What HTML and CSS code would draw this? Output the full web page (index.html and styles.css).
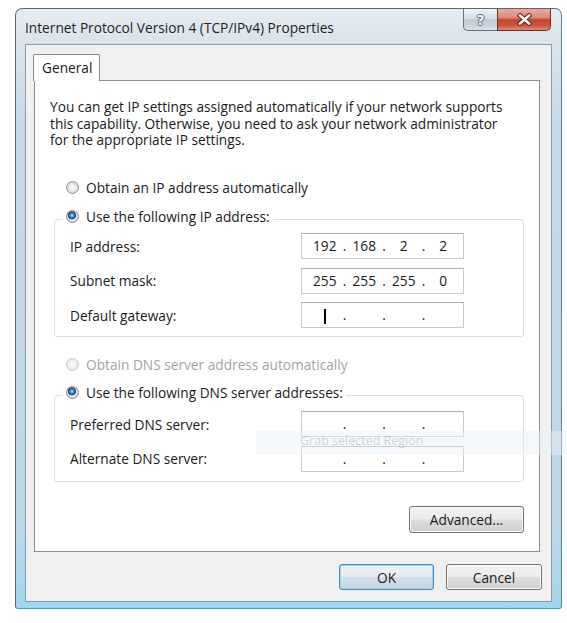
FILE: index.html
```html
<!DOCTYPE html>
<html lang="en">
<head>
<meta charset="utf-8">
<title>Internet Protocol Version 4 (TCP/IPv4) Properties</title>
<link rel="stylesheet" href="styles.css">
</head>
<body>
<div class="window">
  <div class="titlebar">
    <span class="title">Internet Protocol Version 4 (TCP/IPv4) Properties</span>
    <div class="caption">
      <div class="cap-btn help"><span class="qmark">?</span></div>
      <div class="cap-btn close">
        <svg width="17" height="13" viewBox="0 0 17 13">
          <path d="M4 2.5 L13 10.5 M13 2.5 L4 10.5" stroke="#6a2016" stroke-width="4.6" stroke-linecap="square" fill="none"/>
          <path d="M4 2.5 L13 10.5 M13 2.5 L4 10.5" stroke="#ffffff" stroke-width="2.6" stroke-linecap="square" fill="none"/>
        </svg>
      </div>
    </div>
  </div>
  <div class="client">
    <div class="tabs"><div class="tab">General</div></div>
    <div class="panel">
      <p class="desc">You can get IP settings assigned automatically if your network supports this capability. Otherwise, you need to ask your network administrator for the appropriate IP settings.</p>

      <div class="radio-row first-radio"><span class="radio"></span><span>Obtain an IP address automatically</span></div>

      <fieldset class="group group-ip">
        <legend><span class="radio checked"></span><span>Use the following IP address:</span></legend>
        <div class="field-row">
          <span class="label">IP address:</span>
          <div class="ipfield"><span class="oct">192</span><span class="dot">.</span><span class="oct">168</span><span class="dot">.</span><span class="oct">2</span><span class="dot">.</span><span class="oct">2</span></div>
        </div>
        <div class="field-row">
          <span class="label">Subnet mask:</span>
          <div class="ipfield"><span class="oct">255</span><span class="dot">.</span><span class="oct">255</span><span class="dot">.</span><span class="oct">255</span><span class="dot">.</span><span class="oct">0</span></div>
        </div>
        <div class="field-row">
          <span class="label">Default gateway:</span>
          <div class="ipfield"><span class="oct"><span class="caret"></span></span><span class="dot">.</span><span class="oct"></span><span class="dot">.</span><span class="oct"></span><span class="dot">.</span><span class="oct"></span></div>
        </div>
      </fieldset>

      <div class="radio-row disabled dns-auto"><span class="radio"></span><span>Obtain DNS server address automatically</span></div>

      <fieldset class="group group-dns">
        <legend><span class="radio checked"></span><span>Use the following DNS server addresses:</span></legend>
        <div class="field-row">
          <span class="label">Preferred DNS server:</span>
          <div class="ipfield"><span class="oct"></span><span class="dot">.</span><span class="oct"></span><span class="dot">.</span><span class="oct"></span><span class="dot">.</span><span class="oct"></span></div>
        </div>
        <div class="field-row">
          <span class="label">Alternate DNS server:</span>
          <div class="ipfield"><span class="oct"></span><span class="dot">.</span><span class="oct"></span><span class="dot">.</span><span class="oct"></span><span class="dot">.</span><span class="oct"></span></div>
        </div>
      </fieldset>

      <div class="adv-row"><div class="btn adv">Advanced...</div></div>
    </div>
    <div class="footer">
      <div class="btn ok">OK</div>
      <div class="btn cancel">Cancel</div>
    </div>
  </div>
</div>
<div class="grab">Grab selected Region</div>
</body>
</html>
```
FILE: styles.css
```css
* { box-sizing: border-box; }

body {
  margin: 0;
  background: #ffffff;
  font-family: "Open Sans", "Noto Sans", sans-serif;
  font-size: 13.7px;
  color: #1a1a1a;
}

.window {
  margin: 8px 0 0 15px;
  width: 547px;
  height: 601px;
  border: 1px solid #5d666e;
  border-bottom-color: #3f9fcf;
  border-right-color: #55809e;
  border-radius: 7px 7px 3px 3px;
  background: linear-gradient(to bottom, #e6ecf1 0px, #d9e3eb 34px, #c4daea 120px, #bcd7ea 520px, #9fd6ef 600px);
  padding: 0 9px 6px 9px;
  display: flex;
  flex-direction: column;
}

.titlebar {
  height: 35px;
  display: flex;
  justify-content: space-between;
  align-items: flex-start;
}

.title {
  padding-top: 10px;
  line-height: 17px;
  color: #1e1e1e;
}

.caption {
  display: flex;
  height: 22px;
  margin-right: 1px;
}

.cap-btn {
  height: 22px;
  display: flex;
  align-items: center;
  justify-content: center;
  border: 1px solid #6a737c;
  border-top: none;
}

.help {
  width: 34px;
  border-radius: 0 0 0 5px;
  border-right: none;
  background: linear-gradient(to bottom, #eef2f5 0%, #d6dee5 45%, #bdc9d3 52%, #d5e0e8 100%);
}

.qmark {
  font-family: "DejaVu Sans", sans-serif;
  font-weight: bold;
  font-size: 14px;
  line-height: 16px;
  color: #f4f6f8;
  text-shadow: 1px 0 #5c6670, -1px 0 #5c6670, 0 1px #5c6670, 0 -1px #5c6670;
}

.close {
  width: 54px;
  border-radius: 0 0 5px 0;
  border-color: #7a2a20;
  background: linear-gradient(to bottom, #e8ab9e 0%, #d9887a 42%, #c4432e 52%, #c95a43 80%, #dc8f73 100%);
}

.client {
  height: 558px;
  border: 1px solid #8c98a2;
  background: #f0f0f0;
  padding-top: 9px;
}

.tabs {
  display: flex;
  padding-left: 7px;
}

.tab {
  position: relative;
  z-index: 1;
  height: 27px;
  margin-bottom: -1px;
  padding: 0 7px 0 8px;
  line-height: 26px;
  background: #ffffff;
  border: 1px solid #898c95;
  border-bottom: none;
  border-radius: 2px 2px 0 0;
}

.panel {
  margin-left: 8px;
  width: 506px;
  height: 472px;
  background: #ffffff;
  border: 1px solid #898c95;
}

.desc {
  margin: 18px 0 0 15px;
  width: 468px;
  line-height: 16.5px;
}

.radio-row {
  display: flex;
  align-items: center;
  gap: 7px;
  height: 17px;
  line-height: 17px;
  margin-left: 31px;
}

.first-radio { margin-top: 30px; }
.dns-auto { margin-top: 18.5px; }

.disabled { color: #a3a3a3; }

.radio {
  flex: none;
  width: 13px;
  height: 13px;
  border-radius: 50%;
  border: 1px solid #8e9296;
  background: radial-gradient(circle at 50% 50%, #f8f8f8 0, #ececec 3px, #d4d4d4 6px);
}

.disabled .radio {
  border-color: #c9cbcd;
  background: radial-gradient(circle at 50% 50%, #fbfbfb 0, #f2f2f2 3px, #e4e4e4 6px);
}

.radio.checked {
  border-color: #7d8a96;
  background:
    radial-gradient(circle at 45% 40%, #b8e4fa 0, #4e9ed4 1.6px, #1d5f9c 3px, #16406e 3.8px, rgba(0,0,0,0) 4.3px),
    radial-gradient(circle at 50% 50%, #f8f8f8 0, #ececec 3px, #d4d4d4 6px);
}

.group {
  margin: 12px 0 0 19px;
  width: 470px;
  padding: 0 0 8px 0;
  border: 1px solid #d5dfe5;
  border-radius: 3px;
  min-width: 0;
}

.group legend {
  display: flex;
  align-items: center;
  gap: 7px;
  margin-left: 8px;
  padding: 0 3px 6px 3px;
  line-height: 17px;
}

.group-dns {
  margin-top: 11px;
  padding-bottom: 9.5px;
}

.field-row {
  display: flex;
  align-items: center;
  height: 26px;
  margin-top: 8.5px;
}

.group-ip .field-row:first-of-type { margin-top: 2.5px; }
.group-dns .field-row:first-of-type { margin-top: 4.5px; }

.label {
  width: 231px;
  margin-left: 15px;
}

.ipfield {
  display: flex;
  align-items: center;
  width: 163px;
  height: 26px;
  padding-left: 3px;
  border: 1px solid #c6c9cd;
  border-top-color: #a9adb2;
  background: #ffffff;
  line-height: 24px;
}

.oct {
  width: 39.5px;
  height: 24px;
  text-align: center;
}

.dot {
  width: 0;
  display: flex;
  justify-content: center;
}

.caret {
  display: inline-block;
  width: 1.5px;
  height: 15px;
  background: #000000;
  vertical-align: middle;
}

.adv-row {
  display: flex;
  justify-content: flex-end;
  margin-top: 24px;
  padding-right: 15px;
}

.btn {
  display: flex;
  align-items: center;
  justify-content: center;
  height: 26px;
  border: 1px solid #707070;
  border-radius: 3px;
  background: linear-gradient(to bottom, #f3f3f3 0%, #ebebeb 48%, #dddddd 52%, #cfcfcf 100%);
  box-shadow: inset 0 0 0 1px #fbfbfb;
  color: #1a1a1a;
}

.adv {
  width: 115px;
  height: 27px;
}

.footer {
  display: flex;
  justify-content: flex-end;
  gap: 12px;
  margin-top: 12px;
  padding-right: 9px;
}

.ok {
  width: 95px;
  border-color: #3c8cc6;
  background: linear-gradient(to bottom, #eef4f8 0%, #e2ebf1 48%, #d2dfe8 52%, #c6d6e2 100%);
  box-shadow: inset 0 0 0 1px #9ed6f3;
}

.cancel { width: 96px; }

.grab {
  position: absolute;
  left: 256px;
  top: 431px;
  width: 311px;
  height: 24px;
  padding-left: 44px;
  font-size: 12.5px;
  line-height: 20px;
  background: rgba(236, 241, 246, 0.45);
  color: rgba(150, 150, 150, 0.42);
}
```
